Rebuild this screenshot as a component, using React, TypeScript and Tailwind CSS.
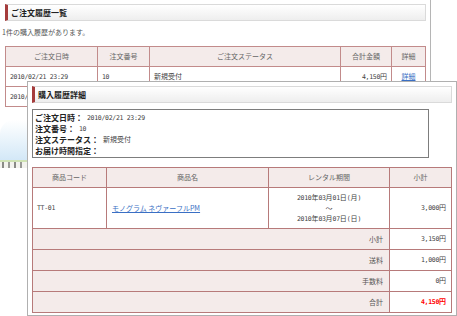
const cell = 'border border-[#c28b8b] px-[4px]';
const head = 'border border-[#c28b8b] bg-[#f4ebea] text-center font-normal text-[#666]';

// half-width digits in the old screenshot are monospaced
function N({ children }: { children: React.ReactNode }) {
  return <span className="font-['DejaVu_Sans_Mono',monospace] text-[6.5px] tracking-[-0.3px]">{children}</span>;
}

function TitleBar({ title }: { title: string }) {
  return (
    <div className="flex h-[17px] items-center border border-[#dadada] border-l-[3px] border-l-[#a53c3c] bg-linear-to-b from-white to-[#eeeeee] pl-[3px] text-[8px] font-bold text-[#222]">
      {title}
    </div>
  );
}

function OrderList() {
  return (
    <div className="absolute left-0 top-0 h-[118px] w-[431px] border-r border-[#b5b5b5] bg-white pl-[5px] pr-[4px] pt-[4px]">
      <TitleBar title="ご注文履歴一覧" />
      <p className="-ml-[3px] mt-[6px] text-[7px] leading-[10px] text-[#555]">1件の購入履歴があります。</p>
      <table className="mt-[9px] w-[421px] table-fixed border-collapse text-[7px] text-[#444]">
        <colgroup>
          <col className="w-[92px]" />
          <col className="w-[52px]" />
          <col className="w-[191px]" />
          <col className="w-[51px]" />
          <col />
        </colgroup>
        <thead>
          <tr className="h-[20px]">
            <th className={head}>ご注文日時</th>
            <th className={head}>注文番号</th>
            <th className={head}>ご注文ステータス</th>
            <th className={head}>合計金額</th>
            <th className={head}>詳細</th>
          </tr>
        </thead>
        <tbody>
          {[0, 1].map((i) => (
            <tr key={i} className="h-[20px]">
              <td className={cell}>
                <N>2010/02/21 23:29</N>
              </td>
              <td className={cell}>
                <N>10</N>
              </td>
              <td className={cell}>新規受付</td>
              <td className={`${cell} text-right`}>
                <N>4,150</N>円
              </td>
              <td className={`${cell} text-center`}>
                <span className="text-[#3a6fc4] underline">詳細</span>
              </td>
            </tr>
          ))}
        </tbody>
      </table>
    </div>
  );
}

function Scenery() {
  return (
    <div className="absolute left-0 top-[120px] flex h-[50px] w-[28px] flex-col">
      <div className="h-[40px] rounded-tl-[14px] bg-linear-to-b from-white to-[#d3e8f7]" />
      <div className="h-[2px] bg-[#cfe3b4]" />
      <div className="flex h-[6px] gap-[4px] bg-[#f3f3ee] px-[2px]">
        <span className="w-[2px] bg-[#8a8a86]" />
        <span className="w-[2px] bg-[#9a9a96]" />
        <span className="w-[2px] bg-[#8a8a86]" />
        <span className="w-[2px] bg-[#9a9a96]" />
      </div>
    </div>
  );
}

function InfoLine({ label, children }: { label: string; children?: React.ReactNode }) {
  return (
    <div className="flex h-[11px] items-center">
      <span className="text-[8px] font-bold text-[#222]">{label}</span>
      {children && <span className="ml-[4px] text-[7px] text-[#444]">{children}</span>}
    </div>
  );
}

function Summary({ label, value, total }: { label: string; value: string; total?: boolean }) {
  return (
    <tr className="h-[21px]">
      <td colSpan={3} className="border border-[#b77a7a] bg-[#f4ebea] pr-[6px] text-right text-[#555]">
        {label}
      </td>
      <td
        className={`border border-[#b77a7a] pr-[5px] text-right ${
          total ? 'font-bold text-[#ff0000]' : 'text-[#444]'
        }`}
      >
        <N>{value}</N>円
      </td>
    </tr>
  );
}

function OrderDetail() {
  return (
    <div className="absolute left-[27px] top-[81px] h-[235px] w-[430px] border border-[#b0b0b0] bg-white px-[4px] pt-[4px]">
      <TitleBar title="購入履歴詳細" />
      <div className="mt-[6px] h-[49px] w-[397px] border border-[#7d7d7d] px-[2px] pt-[2px]">
        <InfoLine label="ご注文日時：">
          <N>2010/02/21 23:29</N>
        </InfoLine>
        <InfoLine label="注文番号：">
          <N>10</N>
        </InfoLine>
        <InfoLine label="注文ステータス：">新規受付</InfoLine>
        <InfoLine label="お届け時間指定：" />
      </div>
      <table className="mt-[9px] w-[420px] table-fixed border-collapse text-[7px] text-[#444]">
        <colgroup>
          <col className="w-[74px]" />
          <col className="w-[162px]" />
          <col className="w-[121px]" />
          <col />
        </colgroup>
        <thead>
          <tr className="h-[20px]">
            <th className="border border-[#b77a7a] bg-[#f4ebea] text-center font-normal text-[#666]">商品コード</th>
            <th className="border border-[#b77a7a] bg-[#f4ebea] text-center font-normal text-[#666]">商品名</th>
            <th className="border border-[#b77a7a] bg-[#f4ebea] text-center font-normal text-[#666]">レンタル期間</th>
            <th className="border border-[#b77a7a] bg-[#f4ebea] text-center font-normal text-[#666]">小計</th>
          </tr>
        </thead>
        <tbody>
          <tr className="h-[41px]">
            <td className="border border-[#b77a7a] pl-[4px]">
              <N>TT-01</N>
            </td>
            <td className="border border-[#b77a7a] pl-[5px]">
              <span className="text-[#3a6fc4] underline">モノグラム ネヴァーフルPM</span>
            </td>
            <td className="border border-[#b77a7a] text-center leading-[10px]">
              <N>2010</N>年<N>03</N>月<N>01</N>日<N>(</N>月<N>)</N>
              <br />～<br />
              <N>2010</N>年<N>03</N>月<N>07</N>日<N>(</N>日<N>)</N>
            </td>
            <td className="border border-[#b77a7a] pr-[5px] text-right">
              <N>3,000</N>円
            </td>
          </tr>
          <Summary label="小計" value="3,150" />
          <Summary label="送料" value="1,000" />
          <Summary label="手数料" value="0" />
          <Summary label="合計" value="4,150" total />
        </tbody>
      </table>
    </div>
  );
}

export default function App() {
  return (
    <div className="relative h-[316px] w-[457px] overflow-hidden bg-white font-['Noto_Sans_CJK_JP','Noto_Sans',sans-serif]">
      <OrderList />
      <Scenery />
      <OrderDetail />
    </div>
  );
}
